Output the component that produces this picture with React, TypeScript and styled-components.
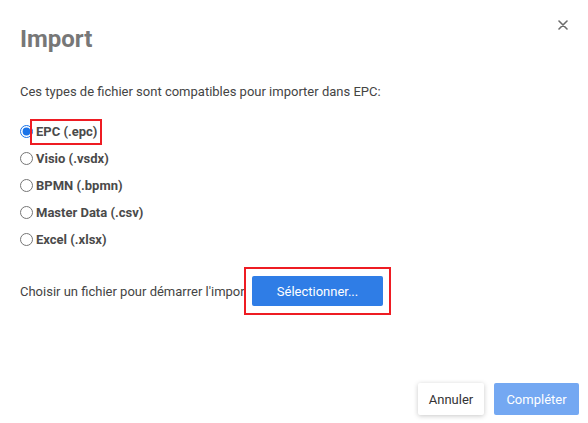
import React, { useState } from 'react';
import styled, { createGlobalStyle } from 'styled-components';

const GlobalStyle = createGlobalStyle`
html, body {
    margin: 0;
    padding: 0;
    background: #ffffff;
    font-family: Roboto, "Liberation Sans", Arial, sans-serif;
}
* {
    box-sizing: border-box;
}
`

const formats = [
    { id: 'epc', label: 'EPC (.epc)' },
    { id: 'vsdx', label: 'Visio (.vsdx)' },
    { id: 'bpmn', label: 'BPMN (.bpmn)' },
    { id: 'csv', label: 'Master Data (.csv)' },
    { id: 'xlsx', label: 'Excel (.xlsx)' },
];

export default function App() {
    const [format, setFormat] = useState('epc');

    return (
        <>
            <GlobalStyle />
            <Dialog>
                <Header>
                    <Title>Import</Title>
                    <CloseButton aria-label="Fermer">
                        <svg width="10" height="10" viewBox="0 0 10 10">
                            <path d="M1 1 L9 9 M9 1 L1 9" stroke="#6b6b6b" strokeWidth="1.6" strokeLinecap="round" />
                        </svg>
                    </CloseButton>
                </Header>
                <Description>Ces types de fichier sont compatibles pour importer dans EPC:</Description>
                <RadioList>
                    {formats.map((f) => (
                        <RadioRow key={f.id}>
                            <Radio
                                type="radio"
                                name="format"
                                checked={format === f.id}
                                onChange={() => setFormat(f.id)}
                            />
                            {f.id === 'epc' ? (
                                <Highlighted>
                                    <RadioLabel>{f.label}</RadioLabel>
                                </Highlighted>
                            ) : (
                                <RadioLabel>{f.label}</RadioLabel>
                            )}
                        </RadioRow>
                    ))}
                </RadioList>
                <PickRow>
                    <PickText>Choisir un fichier pour démarrer l'import:</PickText>
                    <PickFrame>
                        <SelectButton>Sélectionner...</SelectButton>
                    </PickFrame>
                </PickRow>
                <Footer>
                    <CancelButton>Annuler</CancelButton>
                    <DoneButton disabled>Compléter</DoneButton>
                </Footer>
            </Dialog>
        </>
    );
}

const Dialog = styled.div`
width: 588px;
height: 423px;
display: flex;
flex-direction: column;
padding: 25px 9px 8px 20px;
`

const Header = styled.div`
display: flex;
justify-content: space-between;
align-items: flex-start;
`

const Title = styled.h1`
margin: 0;
font-size: 24px;
line-height: 28px;
font-weight: 700;
color: #777777;
`

const CloseButton = styled.button`
border: none;
background: none;
padding: 0;
margin: -5px 11px 0 0;
width: 10px;
height: 10px;
display: flex;
cursor: pointer;
`

const Description = styled.p`
margin: 31px 0 0;
font-size: 13px;
line-height: 16px;
color: #444444;
`

const RadioList = styled.div`
display: flex;
flex-direction: column;
margin-top: 18px;
`

const RadioRow = styled.label`
display: flex;
align-items: center;
height: 27px;
`

const Radio = styled.input`
width: 13px;
height: 13px;
margin: 0 3px 0 0;
accent-color: #1a73e8;
`

const Highlighted = styled.span`
display: flex;
align-items: center;
height: 26px;
padding: 0 3px 0 4px;
margin-left: -6px;
border: 2px solid #ee1c23;
`

const RadioLabel = styled.span`
font-size: 13px;
font-weight: 700;
color: #4a4a4a;
`

const PickRow = styled.div`
display: flex;
align-items: center;
margin-top: 14px;
`

const PickText = styled.span`
width: 224px;
white-space: nowrap;
font-size: 13px;
color: #444444;
`

const PickFrame = styled.div`
position: relative;
background: #ffffff;
border: 2px solid #ee1c23;
padding: 7px 6px;
`

const SelectButton = styled.button`
display: block;
width: 131px;
height: 30px;
border: none;
border-radius: 2px;
background: #2f7de6;
color: #ffffff;
font-family: inherit;
font-size: 13px;
cursor: pointer;
`

const Footer = styled.div`
margin-top: auto;
display: flex;
justify-content: flex-end;
gap: 10px;
`

const CancelButton = styled.button`
width: 66px;
height: 32px;
border: none;
border-radius: 2px;
background: #ffffff;
box-shadow: 0 1px 5px rgba(0, 0, 0, 0.22);
color: #333333;
font-family: inherit;
font-size: 13px;
cursor: pointer;
`

const DoneButton = styled.button`
width: 85px;
height: 32px;
border: none;
border-radius: 2px;
background: #74a8f2;
color: #ffffff;
font-family: inherit;
font-size: 13px;
`
